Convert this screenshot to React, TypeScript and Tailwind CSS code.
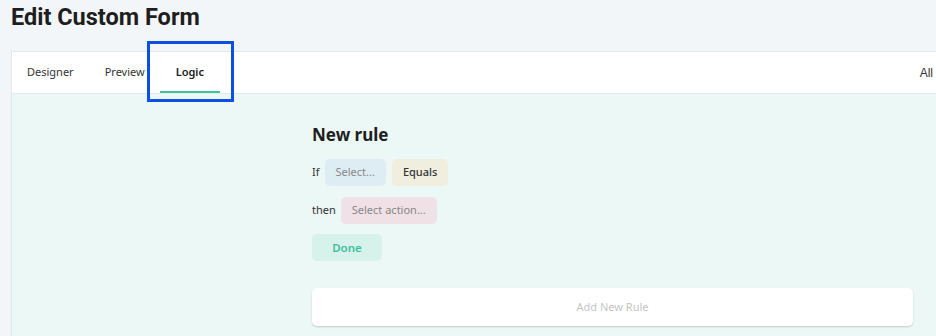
const App = () => {
    return (
        <div className="min-h-[336px] w-[936px] overflow-hidden bg-[#f3f6f9]">
            <h1 className="px-[11px] pt-[2px] h-[51px] font-['Roboto',sans-serif] font-bold text-[23.5px] leading-[30px] text-[#1e1e1e]">
                Edit Custom Form
            </h1>
            <div className="ml-[11px] w-[940px] border border-[#e3e7ec] bg-white">
                <div className="relative flex h-[42px] items-stretch border-b border-[#e6e9ec] font-['Noto_Sans',sans-serif] text-[11px] text-[#333]">
                    <div className="flex items-center pl-[15px] pr-[15px]">Designer</div>
                    <div className="flex items-center pl-[16px] pr-[15px]">Preview</div>
                    <div className="relative flex items-center px-[16px] font-semibold text-[#222]">
                        Logic
                        <span className="absolute bottom-0 left-0 right-0 h-[2px] bg-[#3ec39b]"></span>
                    </div>
                    <div className="flex-1"></div>
                    <div className="flex items-center pr-[17px] font-['Liberation_Sans',sans-serif] text-[12px] text-[#333]">All</div>
                    <div className="pointer-events-none absolute left-[135px] top-[-11px] h-[61px] w-[87px] border-[3px] border-[#0b50e3]"></div>
                </div>
                <div className="h-[250px] bg-[#ecf8f5] pl-[300px] pt-[28px] font-['Noto_Sans',sans-serif]">
                    <div className="text-[17px] font-bold leading-[26px] text-[#1e1e1e]">New rule</div>
                    <div className="mt-[11px] flex flex-col gap-[10.5px] text-[11px]">
                        <div className="flex items-center gap-[5px]">
                            <span className="pr-[0px] text-[#333]">If</span>
                            <span className="flex h-[27px] items-center rounded-[5px] bg-[#deedf4] px-[11px] text-[#888]">Select...</span>
                            <span className="ml-[1px] flex h-[27px] items-center rounded-[5px] bg-[#f0efdf] px-[11px] font-medium text-[#333]">Equals</span>
                        </div>
                        <div className="flex items-center gap-[5px]">
                            <span className="text-[#333]">then</span>
                            <span className="flex h-[27px] items-center rounded-[5px] bg-[#f0e1e6] px-[11px] text-[#888]">Select action...</span>
                        </div>
                        <div className="flex">
                            <span className="flex h-[27px] w-[70px] items-center justify-center rounded-[5px] bg-[#d6f2ea] text-[11.5px] font-semibold text-[#3ec09a]">Done</span>
                        </div>
                    </div>
                    <div className="mt-[27px] flex h-[38px] w-[601px] items-center justify-center rounded-[5px] bg-white text-[11px] text-[#c5c5c5] shadow-[0_1px_2px_rgba(0,0,0,0.18)]">
                        Add New Rule
                    </div>
                </div>
            </div>
        </div>
    )
}

export default App
